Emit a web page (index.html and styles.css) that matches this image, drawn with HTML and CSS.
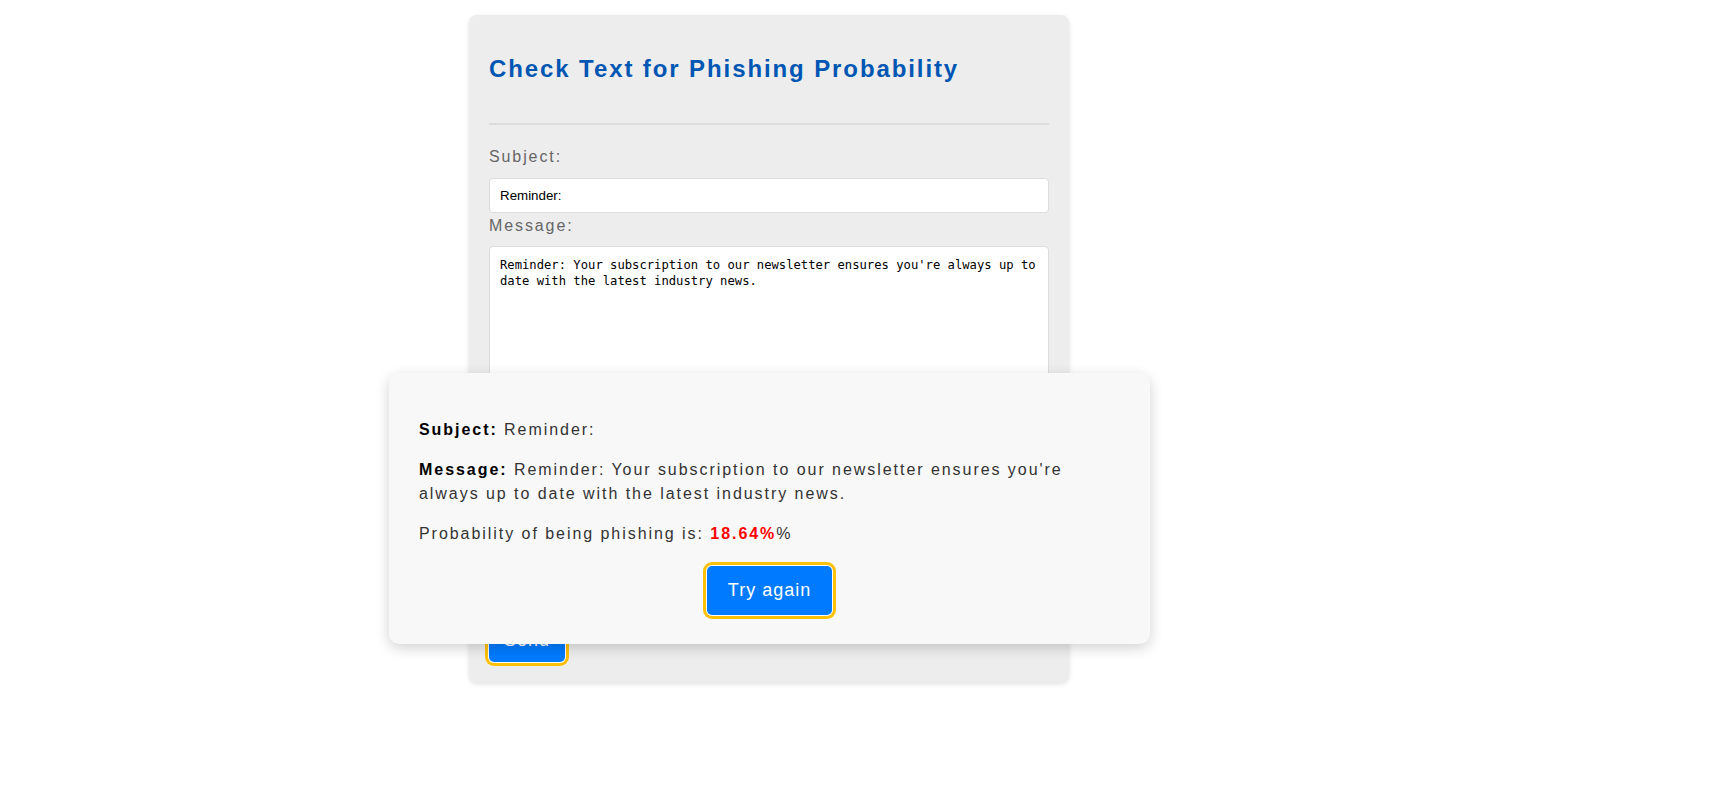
FILE: index.html
```html
<!DOCTYPE html>
<html lang="en">
<head>
<meta charset="utf-8">
<title>Phishing Check</title>
<link rel="stylesheet" href="styles.css">
</head>
<body>
<main class="page">
  <section class="card">
    <header class="card-header">
      <h2 class="title">Check Text for Phishing Probability</h2>
    </header>
    <form class="form">
      <label class="label" for="subject">Subject:</label>
      <input class="input" id="subject" type="text" value="Reminder:">
      <label class="label" for="message">Message:</label>
      <textarea class="textarea" id="message">Reminder: Your subscription to our newsletter ensures you're always up to date with the latest industry news.</textarea>
      <div class="actions">
        <button class="btn btn-send" type="button">Send</button>
      </div>
    </form>
  </section>

  <div class="modal">
    <p class="modal-line"><strong class="key">Subject:</strong> Reminder:</p>
    <p class="modal-line"><strong class="key">Message:</strong> Reminder: Your subscription to our newsletter ensures you're always up to date with the latest industry news.</p>
    <p class="modal-line">Probability of being phishing is: <span class="prob">18.64%</span>%</p>
    <div class="modal-actions">
      <button class="btn btn-retry" type="button">Try again</button>
    </div>
  </div>
</main>
</body>
</html>
```

FILE: styles.css
```css
html, body {
  margin: 0;
  padding: 0;
  background: #ffffff;
}

body {
  font-family: "Liberation Sans", Arial, sans-serif;
  width: 1717px;
  height: 798px;
  overflow: hidden;
}

.page {
  position: relative;
  padding: 15px 0 0 469px;
}

.card {
  width: 600px;
  box-sizing: border-box;
  padding: 0 20px 20px;
  background: #ededed;
  border-radius: 8px;
  box-shadow: 0 2px 5px rgba(0, 0, 0, 0.12);
}

.card-header {
  padding: 20px 0 20px;
  border-bottom: 2px solid #dcdcdc;
}

.title {
  margin: 20px 0;
  font-size: 24px;
  font-weight: bold;
  color: #0056b3;
  letter-spacing: 1.9px;
  line-height: 27.6px;
}

.form {
  display: flex;
  flex-direction: column;
  padding-top: 19.5px;
}

.label {
  display: block;
  font-size: 16px;
  line-height: 25.6px;
  color: #666;
  letter-spacing: 1.9px;
  margin-bottom: 8px;
}

.input {
  box-sizing: border-box;
  width: 100%;
  height: 35px;
  margin: 0;
  padding: 0 10px;
  border: 1px solid #dcdcdc;
  border-radius: 4px;
  background: #fff;
  font-family: "Liberation Sans", Arial, sans-serif;
  font-size: 13.33px;
  color: #000;
}

.textarea {
  box-sizing: border-box;
  width: 100%;
  height: 347px;
  margin: 0;
  padding: 10px;
  border: 1px solid #dcdcdc;
  border-radius: 4px;
  background: #fff;
  font-family: "DejaVu Sans Mono", "Liberation Mono", monospace;
  font-size: 12.2px;
  line-height: 16px;
  color: #000;
  resize: vertical;
}

.actions {
  display: flex;
  padding-top: 20px;
}

.btn {
  border: none;
  border-radius: 5px;
  background: #007bff;
  color: #fff;
  font-family: "Liberation Sans", Arial, sans-serif;
  font-size: 18px;
  letter-spacing: 1px;
  box-shadow: 0 0 0 1px #fff, 0 0 0 4px #ffc107;
  cursor: pointer;
}

.btn-send {
  width: 76px;
  height: 49px;
  padding: 5px 0 0;
}

.modal {
  position: absolute;
  left: 389px;
  top: 373px;
  width: 761px;
  box-sizing: border-box;
  padding: 29px 30px 29px;
  background: #f8f8f8;
  border-radius: 10px;
  box-shadow: 0 4px 14px rgba(0, 0, 0, 0.18);
  color: #333;
}

.modal-line {
  margin: 16px 0;
  font-size: 16px;
  line-height: 24px;
  letter-spacing: 1.95px;
}

.key {
  color: #000;
}

.prob {
  color: #ff0000;
  font-weight: bold;
}

.modal-actions {
  display: flex;
  justify-content: center;
  padding-top: 4px;
}

.btn-retry {
  width: 125px;
  height: 49px;
  padding: 0;
}
```
